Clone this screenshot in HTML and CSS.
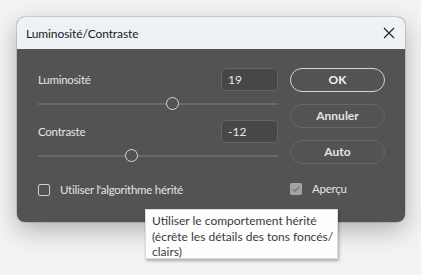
FILE: index.html
```html
<!DOCTYPE html>
<html lang="fr">
<head>
<meta charset="utf-8">
<title>Luminosité/Contraste</title>
<link rel="stylesheet" href="styles.css">
</head>
<body>
<div class="stage">
  <div class="dialog">
    <div class="titlebar">
      <span class="title">Luminosité/Contraste</span>
      <svg class="close" width="12" height="12" viewBox="0 0 12 12"><path d="M1 1L11 11M11 1L1 11" stroke="#1f1f1f" stroke-width="1.1" fill="none"/></svg>
    </div>
    <div class="content">
      <div class="controls">
        <div class="field-row">
          <span class="label">Luminosité</span>
          <div class="input">19</div>
        </div>
        <div class="slider"><div class="track"></div><div class="thumb" style="left:128px"></div></div>
        <div class="field-row second">
          <span class="label">Contraste</span>
          <div class="input">-12</div>
        </div>
        <div class="slider"><div class="track"></div><div class="thumb" style="left:87px"></div></div>
        <div class="check-row">
          <span class="box"></span>
          <span class="label">Utiliser l'algorithme hérité</span>
        </div>
      </div>
      <div class="buttons">
        <div class="btn primary">OK</div>
        <div class="btn">Annuler</div>
        <div class="btn">Auto</div>
        <div class="check-row preview">
          <span class="box checked"><svg width="12" height="12" viewBox="0 0 12 12"><path d="M2.8 6.2L5 8.4L9.3 3.8" stroke="#7b7b7b" stroke-width="1.6" fill="none"/></svg></span>
          <span class="label">Aperçu</span>
        </div>
      </div>
    </div>
  </div>
  <div class="tooltip">Utiliser le comportement hérité<br>(écrête les détails des tons foncés/<br>clairs)</div>
</div>
</body>
</html>
```
FILE: styles.css
```css
* { box-sizing: border-box; }
html, body { margin: 0; padding: 0; }
body {
  background: #f3f3f3;
  font-family: "Lato", "Noto Sans", sans-serif;
  width: 421px;
  height: 275px;
  overflow: hidden;
}
.stage {
  position: relative;
  padding: 17px 16px 0 17px;
}
.dialog {
  width: 388px;
  height: 205px;
  border-radius: 8px;
  overflow: hidden;
  background: #535353;
  box-shadow: 0 8px 24px rgba(0,0,0,0.28), 0 0 0 1px rgba(0,0,0,0.12);
}
.titlebar {
  height: 32px;
  background: #eef2f7;
  display: flex;
  align-items: center;
  justify-content: space-between;
  padding: 0 9px 0 9px;
}
.title {
  font-size: 12px;
  letter-spacing: -0.1px;
  color: #1a1a1a;
}
.close { display: block; margin-right: 1px; }
.content {
  display: flex;
  padding: 19px 20px 0 21px;
  gap: 12px;
}
.controls {
  width: 240px;
  display: flex;
  flex-direction: column;
}
.field-row {
  display: flex;
  justify-content: space-between;
  align-items: center;
  height: 23px;
}
.field-row.second { margin-top: 9px; }
.label {
  font-size: 11.5px;
  letter-spacing: -0.25px;
  color: #e4e4e4;
}
.input {
  width: 57px;
  height: 23px;
  border: 1px solid #646464;
  border-radius: 4px;
  background: #474747;
  color: #e6e6e6;
  font-size: 12px;
  line-height: 21px;
  padding-left: 6px;
}
.slider {
  position: relative;
  height: 14px;
  margin-top: 6px;
}
.track {
  position: absolute;
  left: 0;
  right: 0;
  top: 6px;
  height: 2px;
  background: #696969;
}
.thumb {
  position: absolute;
  top: 0;
  width: 13px;
  height: 13px;
  border: 1.5px solid #d8d8d8;
  border-radius: 50%;
  background: #535353;
}
.check-row {
  display: flex;
  align-items: center;
  gap: 10px;
  margin-top: 20px;
}
.box {
  width: 12px;
  height: 12px;
  border: 1px solid #cfcfcf;
  border-radius: 2px;
  flex: none;
}
.box.checked {
  border: none;
  background: #a3a3a3;
  display: flex;
}
.buttons {
  width: 95px;
  display: flex;
  flex-direction: column;
  gap: 12px;
}
.btn {
  height: 24px;
  border: 1px solid #666;
  border-radius: 12px;
  color: #e4e4e4;
  font-size: 12px;
  font-weight: 700;
  text-align: center;
  line-height: 22px;
}
.btn.primary {
  border-color: #d6d6d6;
  color: #f2f2f2;
}
.preview { margin-top: 6px; gap: 10px; }
.tooltip {
  position: absolute;
  left: 145px;
  top: 209px;
  width: 193px;
  height: 50px;
  background: #fdfdfd;
  border: 1px solid #dcdcdc;
  box-shadow: 1px 2px 3px rgba(0,0,0,0.3);
  padding: 3px 0 0 6px;
  font-size: 12px;
  line-height: 15.5px;
  color: #3a3a3a;
  white-space: nowrap;
}
```
